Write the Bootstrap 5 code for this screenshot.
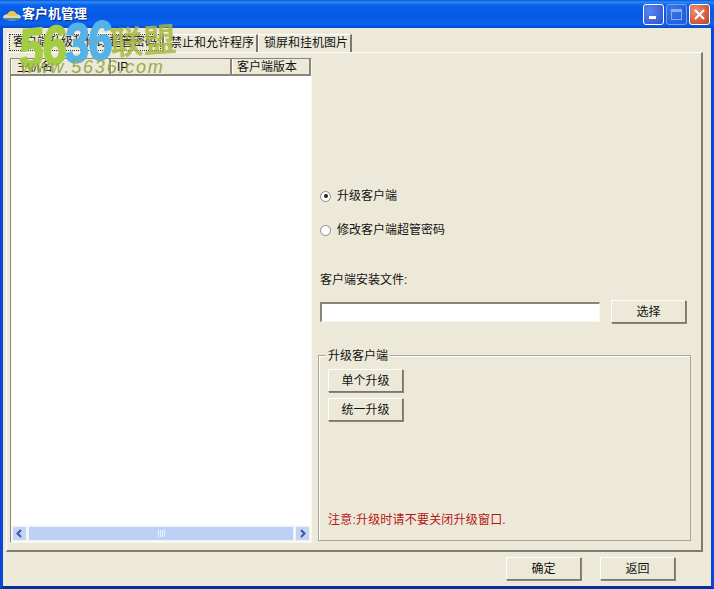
<!DOCTYPE html>
<html lang="zh-CN">
<head>
  <meta charset="UTF-8">
  <title>客户机管理</title>
  <meta name="viewport" content="width=device-width, initial-scale=1">
  <link href="https://cdn.jsdelivr.net/npm/bootstrap@5.3.0/dist/css/bootstrap.min.css" rel="stylesheet">
  <style>
    html, body { height: 100%; }
    body {
      background: #0a3fc0;
      font-family: "Liberation Sans", "Noto Sans CJK SC", sans-serif;
      font-size: 12px;
      color: #111;
      overflow: hidden;
    }
    .xp-window {
      width: 714px; height: 589px;
      position: relative;
      border-left: 3px solid #0a46d8;
      border-right: 3px solid #0a46d8;
      border-bottom: 3px solid #06309a;
    }
    .xp-title {
      height: 28px;
      margin: 0 -3px;
      padding: 0 4px 0 3px;
      background: linear-gradient(to bottom, #0a52dc 0, #2f8cf6 2px, #0a62ec 5px, #0658e4 16px, #0a64f0 24px, #0648cc 28px);
      color: #fff;
      font-weight: bold;
      font-size: 13px;
      text-shadow: 1px 1px 0 #0a2a80;
    }
    .xp-btn {
      width: 21px; height: 21px;
      border: 1px solid #fff;
      border-radius: 3px;
      background: radial-gradient(circle at 30% 30%, #5a86ee, #2a50d0);
      margin-left: 2px;
      display: flex; align-items: center; justify-content: center;
    }
    .xp-btn.is-off { opacity: .62; border-color: #b8c8f4; }
    .xp-btn.is-close { background: radial-gradient(circle at 30% 30%, #e8917a, #c43c1c); }
    .xp-body {
      background: #ece9d8;
      height: 558px;
      padding: 6px 8px 0 3px;
      position: relative;
    }
    .xp-tabs { height: 18px; padding-left: 1px; position: relative; }
    .xp-tab {
      height: 18px;
      padding: 0 2px 0 5px;
      line-height: 17px;
      border: 1px solid #fff;
      border-right: 2px solid #7a776c;
      border-bottom: 0;
      white-space: nowrap;
    }
    .xp-tab.is-on { width: 157px; margin-top: -1px; height: 19px; padding-left: 2px; }
    .xp-tab.is-on span { outline: 1px dotted #333; padding: 0 3px; display: inline-block; line-height: 15px; }
    .xp-panel {
      height: 500px;
      border: 1px solid #fff;
      border-right: 2px solid #7f7c70;
      border-bottom: 2px solid #7f7c70;
      padding: 5px 5px 7px 3px;
      gap: 6px;
    }
    .xp-list {
      width: 302px; height: 485px;
      background: #fff;
      border: 1px solid;
      border-color: #8a877a #f8f6ee #f8f6ee #8a877a;
    }
    .xp-head { height: 17px; background: #ece9d8; border-bottom: 2px solid #8a877a; line-height: 16px; }
    .xp-head div { border-right: 2px solid #8a877a; border-left: 1px solid #fff; padding-left: 5px; white-space: nowrap; }
    .xp-col-name { width: 100px; }
    .xp-col-ip { width: 121px; }
    .xp-col-ver { width: 79px; padding-left: 4px !important; }
    .xp-rows { flex: 1; }
    .xp-scroll { height: 17px; background: #fafaf4; padding: 0 1px; gap: 1px; }
    .xp-arrow {
      width: 15px; height: 15px;
      background: #c4d4f6;
      border: 1px solid #eef2fc;
      border-radius: 2px;
      display: flex; align-items: center; justify-content: center;
    }
    .xp-thumb {
      flex: 1; height: 15px;
      background: #bdd0f6;
      border: 1px solid #eef2fc;
      border-radius: 2px;
      display: flex; align-items: center; justify-content: center;
    }
    .xp-side { flex: 1; padding-left: 2px; }
    .xp-gap-top { height: 130px; }
    .xp-radio {
      width: 11px; height: 11px;
      border-radius: 50%;
      background: #fff;
      border: 1px solid #8a8a80;
      display: inline-flex; align-items: center; justify-content: center;
    }
    .xp-radio.is-on::after { content: ""; width: 4px; height: 4px; background: #222; border-radius: 50%; }
    .xp-opt { height: 16px; gap: 6px; }
    .xp-opt-second { margin-top: 18px; }
    .xp-caption { margin-top: 33px; line-height: 18px; }
    .xp-file-row { margin-top: 11px; gap: 11px; }
    .xp-input {
      width: 280px; height: 20px;
      background: #fff;
      border: 1px solid;
      border-width: 2px 1px 1px 2px;
      border-color: #8a877a #f8f6ee #f8f6ee #8a877a;
    }
    .xp-push {
      width: 75px; height: 23px;
      background: #ece9d8;
      border: 1px solid;
      border-color: #fff #7a776c #7a776c #fff;
      box-shadow: 1px 1px 0 #8a877a;
      padding: 0;
      font-size: 12px;
      color: #111;
      text-align: center;
      line-height: 20px;
    }
    .xp-group {
      height: 186px;
      width: 373px;
      margin: 32px 0 0 -2px;
      border: 1px solid #a8a698;
      box-shadow: 1px 1px 0 #fff inset;
      padding: 13px 8px 0 9px;
      position: relative;
      gap: 6px;
    }
    .xp-legend {
      position: absolute; top: -9px; left: 7px;
      padding: 0 2px;
      background: #ece9d8;
    }
    .xp-warn { color: #b81414; margin-top: auto; padding-bottom: 11px; letter-spacing: .2px; }
    /* watermark sits over the tabs and list header */
    .xp-mark { position: absolute; left: 14px; top: -7px; z-index: 5; pointer-events: none; white-space: nowrap; width: 170px; height: 60px; }
    .xp-mark-num {
      position: absolute; top: 1px; left: -1px;
      display: inline-block;
      font: italic bold 44px/43px "Liberation Sans", sans-serif;
      letter-spacing: -1.500px;
      transform: rotate(-6deg) scaleY(1.25);
      transform-origin: 0 0;
    }
    .tone-g { color: #a4cc44; -webkit-text-stroke: 1.500px #a4cc44; }
    .tone-b { color: #56b2e6; -webkit-text-stroke: 1.500px #56b2e6; }
    .xp-mark-cn {
      position: absolute; left: 93px; top: -4px;
      font: bold 33px/44px "Noto Sans CJK SC", sans-serif;
      color: #a8b840; opacity: .85;
      transform: rotate(-4deg);
    }
    .xp-mark-url { position: absolute; left: 4px; top: 37px; font: italic 18px/18px "Liberation Sans", sans-serif; color: #9aaa48; letter-spacing: 1.800px; }
    .xp-foot { gap: 19px; padding: 5px 28px 0 0; }
  </style>
</head>
<body>

<div class="xp-window">
  <div class="xp-title d-flex align-items-center">
    <svg width="19" height="13" viewBox="0 0 19 13">
      <ellipse cx="9" cy="9" rx="9" ry="3.5" fill="#d8d8c0"/>
      <path d="M4 8 A5 5 0 0 1 14 8 Z" fill="#e8c84a"/>
      <path d="M1 10 H17 L15 12 H3 Z" fill="#5a8a78"/>
    </svg>
    <span class="flex-grow-1">客户机管理</span>
    <div class="xp-btn"><svg width="11" height="11"><rect x="1" y="7" width="7" height="3" fill="#fff"/></svg></div>
    <div class="xp-btn is-off"><svg width="13" height="13" fill="none" stroke="#d8e0f8"><rect x="1.500" y="1.500" width="10" height="10"/><path d="M1 3h11" stroke-width="2"/></svg></div>
    <div class="xp-btn is-close"><svg width="13" height="13" stroke="#fff" stroke-width="2"><path d="M2 2 11 11M11 2 2 11"/></svg></div>
  </div>

  <div class="xp-body">
    <div class="xp-mark">
      <div class="xp-mark-num"><span class="tone-g">56</span><span class="tone-b">36</span></div>
      <div class="xp-mark-cn">联盟</div>
      <div class="xp-mark-url">www.5636.com</div>
    </div>

    <div class="xp-tabs d-flex align-items-end">
      <div class="xp-tab is-on"><span>客户端升级和修改超管密码</span></div>
      <div class="xp-tab">禁止和允许程序</div>
      <div class="xp-tab">锁屏和挂机图片</div>
    </div>

    <div class="xp-panel d-flex">
      <div class="xp-list d-flex flex-column">
        <div class="xp-head d-flex">
          <div class="xp-col-name">主机名</div>
          <div class="xp-col-ip">IP</div>
          <div class="xp-col-ver">客户端版本</div>
        </div>
        <div class="xp-rows"></div>
        <div class="xp-scroll d-flex align-items-center">
          <div class="xp-arrow"><svg width="9" height="9" fill="none" stroke="#3a5a9c" stroke-width="2"><path d="M6 1 2.500 4.500 6 8"/></svg></div>
          <div class="xp-thumb"><svg width="9" height="7" stroke="#eef2fc"><path d="M1.500 0v7M3.500 0v7M5.500 0v7M7.500 0v7"/></svg></div>
          <div class="xp-arrow"><svg width="9" height="9" fill="none" stroke="#3a5a9c" stroke-width="2"><path d="M3 1 6.500 4.500 3 8"/></svg></div>
        </div>
      </div>

      <div class="xp-side d-flex flex-column">
        <div class="xp-gap-top"></div>
        <div class="xp-opt d-flex align-items-center"><span class="xp-radio is-on"></span>升级客户端</div>
        <div class="xp-opt xp-opt-second d-flex align-items-center"><span class="xp-radio"></span>修改客户端超管密码</div>
        <div class="xp-caption">客户端安装文件:</div>
        <div class="xp-file-row d-flex align-items-center">
          <div class="xp-input"></div>
          <button class="xp-push">选择</button>
        </div>
        <div class="xp-group d-flex flex-column align-items-start">
          <span class="xp-legend">升级客户端</span>
          <button class="xp-push">单个升级</button>
          <button class="xp-push">统一升级</button>
          <div class="xp-warn">注意:升级时请不要关闭升级窗口.</div>
        </div>
      </div>
    </div>

    <div class="xp-foot d-flex justify-content-end">
      <button class="xp-push">确定</button>
      <button class="xp-push">返回</button>
    </div>
  </div>
</div>

</body>
</html>
